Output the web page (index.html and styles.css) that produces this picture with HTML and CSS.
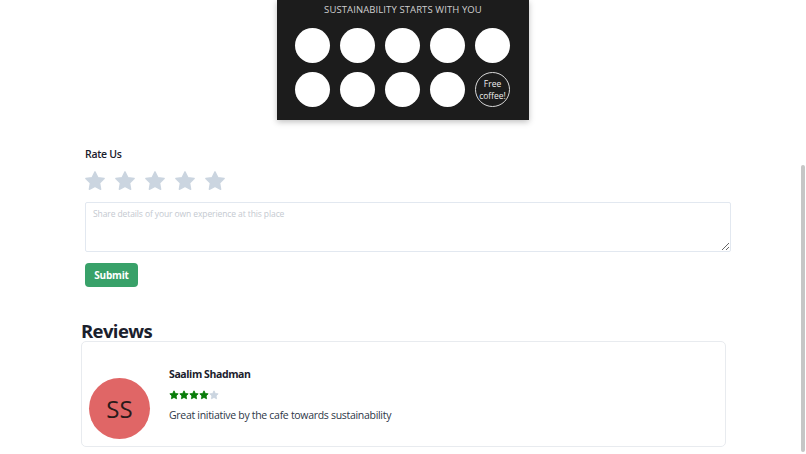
FILE: index.html
```html
<!DOCTYPE html>
<html lang="en">
<head>
    <meta charset="UTF-8">
    <meta name="viewport" content="width=device-width, initial-scale=1.0">
    <title>Cafe Reviews</title>
    <link rel="stylesheet" href="styles.css">
</head>
<body>
    <div class="stamp-card">
        <p class="stamp-title">SUSTAINABILITY STARTS WITH YOU</p>
        <div class="stamps">
            <span class="stamp"></span>
            <span class="stamp"></span>
            <span class="stamp"></span>
            <span class="stamp"></span>
            <span class="stamp"></span>
            <span class="stamp"></span>
            <span class="stamp"></span>
            <span class="stamp"></span>
            <span class="stamp"></span>
            <span class="stamp stamp-free">Free<br>coffee!</span>
        </div>
    </div>

    <section class="rate">
        <h3 class="rate-title">Rate Us</h3>
        <div class="rate-stars">
            <svg viewBox="0 0 24 24"><path d="M12 2l3.09 6.26L22 9.27l-5 4.87 1.18 6.88L12 17.77l-6.18 3.25L7 14.14 2 9.27l6.91-1.01z"/></svg>
            <svg viewBox="0 0 24 24"><path d="M12 2l3.09 6.26L22 9.27l-5 4.87 1.18 6.88L12 17.77l-6.18 3.25L7 14.14 2 9.27l6.91-1.01z"/></svg>
            <svg viewBox="0 0 24 24"><path d="M12 2l3.09 6.26L22 9.27l-5 4.87 1.18 6.88L12 17.77l-6.18 3.25L7 14.14 2 9.27l6.91-1.01z"/></svg>
            <svg viewBox="0 0 24 24"><path d="M12 2l3.09 6.26L22 9.27l-5 4.87 1.18 6.88L12 17.77l-6.18 3.25L7 14.14 2 9.27l6.91-1.01z"/></svg>
            <svg viewBox="0 0 24 24"><path d="M12 2l3.09 6.26L22 9.27l-5 4.87 1.18 6.88L12 17.77l-6.18 3.25L7 14.14 2 9.27l6.91-1.01z"/></svg>
        </div>
        <textarea class="rate-text" placeholder="Share details of your own experience at this place"></textarea>
        <button class="btn-submit">Submit</button>
    </section>

    <section class="reviews">
        <h2 class="reviews-title">Reviews</h2>
        <div class="review-card">
            <div class="avatar">SS</div>
            <div class="review-body">
                <div class="review-name">Saalim Shadman</div>
                <div class="review-stars">
                    <svg class="on" viewBox="0 0 24 24"><path d="M12 2l3.09 6.26L22 9.27l-5 4.87 1.18 6.88L12 17.77l-6.18 3.25L7 14.14 2 9.27l6.91-1.01z"/></svg>
                    <svg class="on" viewBox="0 0 24 24"><path d="M12 2l3.09 6.26L22 9.27l-5 4.87 1.18 6.88L12 17.77l-6.18 3.25L7 14.14 2 9.27l6.91-1.01z"/></svg>
                    <svg class="on" viewBox="0 0 24 24"><path d="M12 2l3.09 6.26L22 9.27l-5 4.87 1.18 6.88L12 17.77l-6.18 3.25L7 14.14 2 9.27l6.91-1.01z"/></svg>
                    <svg class="on" viewBox="0 0 24 24"><path d="M12 2l3.09 6.26L22 9.27l-5 4.87 1.18 6.88L12 17.77l-6.18 3.25L7 14.14 2 9.27l6.91-1.01z"/></svg>
                    <svg viewBox="0 0 24 24"><path d="M12 2l3.09 6.26L22 9.27l-5 4.87 1.18 6.88L12 17.77l-6.18 3.25L7 14.14 2 9.27l6.91-1.01z"/></svg>
                </div>
                <p class="review-text">Great initiative by the cafe towards sustainability</p>
            </div>
        </div>
    </section>

    <div class="scrollbar"></div>
</body>
</html>
```

FILE: styles.css
```css
body {
    margin: 0;
    font-family: "Open Sans", "Noto Sans", sans-serif;
    color: #1a202c;
    background: #fff;
    overflow: hidden;
}

/* stamp card */
.stamp-card {
    width: 252px;
    height: 120px;
    margin: 0 auto;
    background: #1c1c1c;
    box-shadow: 0 2px 6px rgba(0, 0, 0, 0.25);
    box-sizing: border-box;
    padding-top: 3px;
}
.stamp-title {
    margin: 0;
    text-align: center;
    color: #cfcfcf;
    font-size: 9.5px;
    line-height: 14px;
    letter-spacing: 0.1px;
}
.stamps {
    display: grid;
    grid-template-columns: repeat(5, 35px);
    column-gap: 10px;
    row-gap: 9px;
    padding: 11px 0 0 18px;
}
.stamp {
    width: 35px;
    height: 35px;
    border-radius: 50%;
    background: #fff;
}
.stamp-free {
    background: transparent;
    border: 1px solid #d8d8d8;
    box-sizing: border-box;
    color: #eee;
    font-size: 8.5px;
    line-height: 12px;
    display: flex;
    align-items: center;
    justify-content: center;
    text-align: center;
}

/* rating form */
.rate {
    margin: 26px 75px 0 85px;
}
.rate-title {
    margin: 0;
    font-size: 10.5px;
    line-height: 16px;
    font-weight: 600;
    letter-spacing: -0.3px;
}
.rate-stars {
    display: flex;
    gap: 8px;
    margin: 8px 0 0 -1px;
    height: 22px;
    align-items: center;
}
.rate-stars svg {
    width: 22px;
    height: 22px;
    fill: #cbd5e0;
    stroke: #cbd5e0;
    stroke-width: 1.5;
    stroke-linejoin: round;
}
.rate-text {
    display: block;
    width: 100%;
    height: 50px;
    margin-top: 10px;
    box-sizing: border-box;
    border: 1px solid #e2e8f0;
    border-radius: 2px;
    padding: 5px 7px;
    font-family: inherit;
    font-size: 8.5px;
    letter-spacing: -0.1px;
    resize: vertical;
}
.rate-text::placeholder {
    color: #c4c9d0;
}
.btn-submit {
    display: block;
    margin-top: 11px;
    width: 53px;
    height: 24px;
    border: none;
    border-radius: 4px;
    background: #38a169;
    color: #fff;
    font-family: inherit;
    font-size: 10px;
    font-weight: 700;
    letter-spacing: -0.2px;
    padding: 0;
}

/* reviews */
.reviews {
    margin: 33px 80px 0 81px;
}
.reviews-title {
    margin: 0;
    font-size: 18.5px;
    line-height: 21px;
    font-weight: 700;
    letter-spacing: -0.6px;
}
.review-card {
    display: flex;
    align-items: flex-start;
    border: 1px solid #e8ebef;
    border-radius: 5px;
    padding: 24px 8px 6px 7px;
    height: 106px;
    box-sizing: border-box;
}
.avatar {
    width: 61px;
    height: 61px;
    margin-top: 12px;
    border-radius: 50%;
    background: #e06666;
    color: #2a1a1a;
    font-size: 24px;
    display: flex;
    align-items: center;
    justify-content: center;
    flex-shrink: 0;
}
.review-body {
    padding-left: 19px;
}
.review-name {
    font-size: 10.5px;
    line-height: 17px;
    font-weight: 700;
    letter-spacing: -0.4px;
}
.review-stars {
    margin-top: 7px;
    height: 10px;
    display: flex;
}
.review-stars svg {
    width: 10px;
    height: 10px;
    fill: #cbd5e0;
    stroke: #cbd5e0;
    stroke-width: 2;
    stroke-linejoin: round;
}
.review-stars .on {
    fill: #0a7d0a;
    stroke: #0a7d0a;
}
.review-text {
    margin: 8px 0 0;
    font-size: 10.5px;
    line-height: 15px;
    letter-spacing: -0.3px;
    color: #2d3748;
}

.scrollbar {
    position: absolute;
    right: 1px;
    top: 165px;
    width: 4px;
    height: 287px;
    background: #c6c6c6;
    border-radius: 2px;
}
```
